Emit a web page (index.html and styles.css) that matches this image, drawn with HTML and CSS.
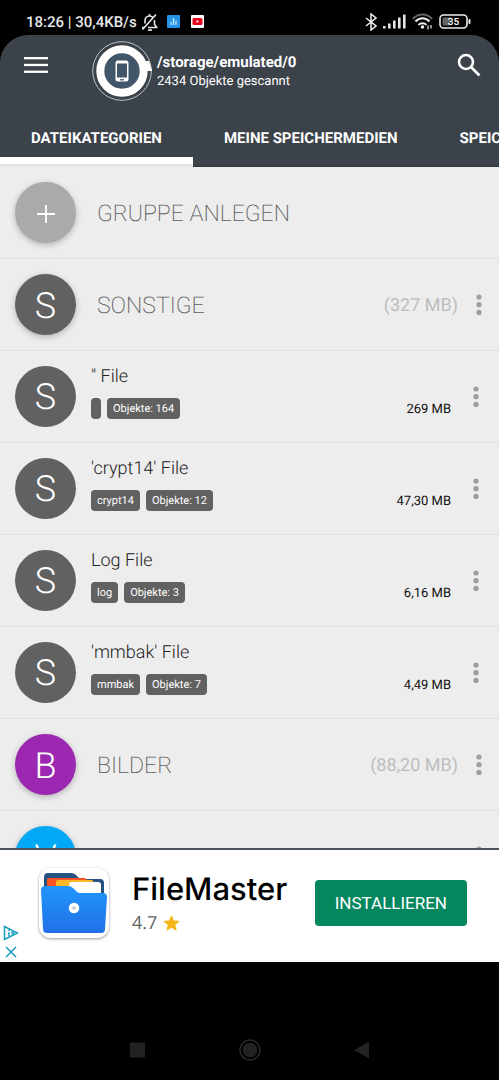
FILE: index.html
```html
<!DOCTYPE html>
<html lang="de">
<head>
    <meta charset="UTF-8">
    <meta name="viewport" content="width=device-width, initial-scale=1.0">
    <title>Dateikategorien</title>
    <link rel="stylesheet" href="styles.css">
</head>
<body>
    <svg class="defs" aria-hidden="true">
        <symbol id="dots" viewBox="0 0 6 22">
            <circle cx="3" cy="3" r="2.600"/><circle cx="3" cy="10.700" r="2.600"/><circle cx="3" cy="18.400" r="2.600"/>
        </symbol>
    </svg>

    <div class="phone">
        <!-- Status bar -->
        <div class="status-bar">
            <div class="status-left">
                <span>18:26 | 30,4KB/s</span>
                <svg width="18" height="18" viewBox="0 0 18 18" fill="none" stroke="#e8e8e8" stroke-width="1.6">
                    <path d="M1 14.500h3M7 14.500h9.500M4 10.500V8c0-3 2-5 4.500-5 1.500 0 2.500.5 3.300 1.300M13.500 7v4.500l2.500 3M8.500 3V1M1.500 16.500L15 1.500"/>
                    <path d="M7 17h4"/>
                </svg>
                <svg class="status-app" width="13" height="13" viewBox="0 0 13 13">
                    <rect width="13" height="13" rx="1" fill="#2492e6"/>
                    <path d="M4 10V7M6.500 10V3M9 10V5.500" stroke="#c5e6ff" stroke-width="1.300"/>
                </svg>
                <svg class="status-app" width="13" height="13" viewBox="0 0 13 13">
                    <rect width="13" height="13" rx="1" fill="#fff"/>
                    <rect x="1.500" y="3" width="10" height="7" rx="1.500" fill="#e8001c"/>
                    <path d="M5.500 5v3l2.500-1.500z" fill="#fff"/>
                </svg>
            </div>
            <div class="status-right">
                <svg width="12" height="18" viewBox="0 0 12 18" fill="none" stroke="#eee" stroke-width="1.500">
                    <path d="M1 5l10 8-5 4V1l5 4-10 8"/>
                </svg>
                <svg width="23" height="15" viewBox="0 0 23 15" fill="#e4e4e4">
                    <rect x="0" y="12" width="2.600" height="2.500"/><rect x="5" y="9.500" width="2.600" height="5"/>
                    <rect x="10" y="6.500" width="2.600" height="8"/><rect x="15" y="3.500" width="2.600" height="11"/>
                    <rect x="20" y="0.500" width="2.600" height="14"/>
                </svg>
                <svg width="21" height="17" viewBox="0 0 21 17" fill="none" stroke-width="2">
                    <path d="M1 6c5-6 14-6 19 0" stroke="#666"/>
                    <path d="M3.500 8.500c4-4.500 10-4.500 14 0M6.500 12c2-2.500 6-2.500 8 0" stroke="#eee"/>
                    <circle cx="10.500" cy="14" r="1.800" fill="#eee"/>
                    <path d="M16 12.500v4M19 12v3.500" stroke="#ddd" stroke-width="1.300"/>
                </svg>
                <svg width="32" height="15" viewBox="0 0 32 15">
                    <rect x="1" y="1" width="27" height="13" rx="3.500" fill="none" stroke="#eee" stroke-width="1.600"/>
                    <rect x="3.500" y="3.500" width="8" height="8" rx="1" fill="#666"/>
                    <rect x="29.500" y="5" width="2" height="5" rx="1" fill="#eee"/>
                    <text class="battery-text" x="14.500" y="11" text-anchor="middle">35</text>
                </svg>
            </div>
        </div>

        <!-- Toolbar and tabs -->
        <header class="header">
            <div class="toolbar">
                <button class="icon-btn" aria-label="Menü">
                    <svg width="25" height="18" viewBox="0 0 25 18" fill="#fff">
                        <rect x="1" y="1" width="24" height="2.300"/><rect x="1" y="7.800" width="24" height="2.300"/><rect x="1" y="14.600" width="24" height="2.300"/>
                    </svg>
                </button>
                <svg class="storage-icon" width="62" height="62" viewBox="0 0 62 62">
                    <circle cx="30" cy="30" r="29.300" fill="none" stroke="#b9c3cb"/>
                    <circle cx="30" cy="30" r="21.700" fill="#42566a" stroke="#fff" stroke-width="8"/>
                    <path d="M54 20h3l3 9v1h-6z" fill="#fff"/>
                    <rect x="23.500" y="19.500" width="13" height="21" rx="2.300" fill="#fff"/>
                    <rect x="25" y="22.500" width="10" height="14" fill="#42566a"/>
                    <rect x="28" y="38.200" width="4" height="1.200" fill="#42566a"/>
                </svg>
                <div class="storage-info">
                    <h1 class="storage-path">/storage/emulated/0</h1>
                    <p class="storage-count">2434 Objekte gescannt</p>
                </div>
                <button class="icon-btn" aria-label="Suchen">
                    <svg width="24" height="24" viewBox="0 0 24 24" fill="none" stroke="#fff" stroke-width="2.600">
                        <circle cx="9" cy="9" r="7"/><path d="M14 14l8.500 8.500"/>
                    </svg>
                </button>
            </div>
            <nav class="tabs">
                <a class="tab active" href="#kategorien">DATEIKATEGORIEN</a>
                <a class="tab" href="#medien">MEINE SPEICHERMEDIEN</a>
                <a class="tab" href="#speicher">SPEICHER</a>
            </nav>
        </header>

        <!-- Category list -->
        <main class="list">
            <div class="row group">
                <button class="avatar add raised" aria-label="Gruppe anlegen">
                    <svg width="18" height="18" viewBox="0 0 18 18" stroke="#fff" stroke-width="1.800"><path d="M9 0v18M0 9h18"/></svg>
                </button>
                <h2 class="group-name">GRUPPE ANLEGEN</h2>
            </div>
            <div class="row group">
                <div class="avatar raised">S</div>
                <h2 class="group-name">SONSTIGE</h2>
                <span class="group-size">(327 MB)</span>
                <button class="more" aria-label="Mehr"><svg width="6" height="22"><use href="#dots"/></svg></button>
            </div>
            <div class="row file">
                <div class="avatar">S</div>
                <div class="file-info">
                    <h3 class="file-name">" File</h3>
                    <div class="tags"><span class="tag"></span><span class="tag">Objekte: 164</span></div>
                </div>
                <span class="file-size">269 MB</span>
                <button class="more" aria-label="Mehr"><svg width="6" height="22"><use href="#dots"/></svg></button>
            </div>
            <div class="row file">
                <div class="avatar">S</div>
                <div class="file-info">
                    <h3 class="file-name">'crypt14' File</h3>
                    <div class="tags"><span class="tag">crypt14</span><span class="tag">Objekte: 12</span></div>
                </div>
                <span class="file-size">47,30 MB</span>
                <button class="more" aria-label="Mehr"><svg width="6" height="22"><use href="#dots"/></svg></button>
            </div>
            <div class="row file">
                <div class="avatar">S</div>
                <div class="file-info">
                    <h3 class="file-name">Log File</h3>
                    <div class="tags"><span class="tag">log</span><span class="tag">Objekte: 3</span></div>
                </div>
                <span class="file-size">6,16 MB</span>
                <button class="more" aria-label="Mehr"><svg width="6" height="22"><use href="#dots"/></svg></button>
            </div>
            <div class="row file">
                <div class="avatar">S</div>
                <div class="file-info">
                    <h3 class="file-name">'mmbak' File</h3>
                    <div class="tags"><span class="tag">mmbak</span><span class="tag">Objekte: 7</span></div>
                </div>
                <span class="file-size">4,49 MB</span>
                <button class="more" aria-label="Mehr"><svg width="6" height="22"><use href="#dots"/></svg></button>
            </div>
            <div class="row group">
                <div class="avatar raised purple">B</div>
                <h2 class="group-name">BILDER</h2>
                <span class="group-size">(88,20 MB)</span>
                <button class="more" aria-label="Mehr"><svg width="6" height="22"><use href="#dots"/></svg></button>
            </div>
            <div class="row group">
                <div class="avatar raised blue">V</div>
                <h2 class="group-name">VIDEOS</h2>
                <button class="more" aria-label="Mehr"><svg width="6" height="22"><use href="#dots"/></svg></button>
            </div>
        </main>

        <!-- Ad banner -->
        <aside class="ad">
            <div class="ad-controls">
                <a href="#info" aria-label="Info">
                    <svg width="16" height="16" viewBox="0 0 16 16" fill="none" stroke="#1a9dba" stroke-width="1.500">
                        <path d="M1.500 1.500v13l13-6.500z"/><path d="M6 7v4.500M6 4.500v1.500"/><path d="M8.500 6v4l3.500-2z" fill="#1a9dba" stroke="none"/>
                    </svg>
                </a>
                <button class="ad-close" aria-label="Schließen">
                    <svg width="12" height="12" viewBox="0 0 12 12" stroke="#1a9dba" stroke-width="1.500"><path d="M1 1l10 10M11 1L1 11"/></svg>
                </button>
            </div>
            <svg class="ad-icon" width="70" height="70" viewBox="0 0 70 70">
                <defs>
                    <linearGradient id="folder" x1="0" y1="0" x2="0" y2="1">
                        <stop offset="0" stop-color="#2196fb"/><stop offset="1" stop-color="#2170e8"/>
                    </linearGradient>
                </defs>
                <path d="M5 20V9q0-4 4-4h23q3 0 5 2l4 4h20q4 0 4 4v15H5z" fill="#265283"/>
                <path d="M8 25V12q0-2 2-2h36l2 2v13z" fill="#fb5226"/>
                <path d="M17 25V14q0-2 2-2h34l2 2v11z" fill="#fdb827"/>
                <path d="M30 17q0-3 3-3h26q3 0 3 3v12H35z" fill="#fff"/>
                <path d="M2 22q0-4 4-4h23q3 0 5 2l4 4q1 1 3 1h23q4 0 4 4l-2 32q0 4-4 4H8q-4 0-4-4z" fill="url(#folder)"/>
                <circle cx="35" cy="40" r="5.300" fill="#fff"/>
                <circle cx="35" cy="40" r="1.800" fill="#bfc8d0"/>
            </svg>
            <div class="ad-info">
                <div class="ad-title">FileMaster</div>
                <div class="ad-rating">
                    <span>4.7</span>
                    <svg width="17" height="16" viewBox="0 0 24 23" fill="#f4b615"><path d="M12 0l3.500 8 8.500.8-6.500 5.700 2 8.500L12 18.500 4.500 23l2-8.500L0 8.800 8.500 8z"/></svg>
                </div>
            </div>
            <button class="install">INSTALLIEREN</button>
        </aside>

        <!-- Android navigation -->
        <nav class="nav-bar">
            <button class="nav-btn" aria-label="Letzte Apps">
                <svg width="22" height="22" viewBox="0 0 22 22"><rect x="3" y="3.500" width="15" height="15" fill="#222"/></svg>
            </button>
            <button class="nav-btn" aria-label="Startseite">
                <svg width="22" height="22" viewBox="0 0 22 22"><circle cx="11" cy="11" r="10" fill="none" stroke="#292929" stroke-width="1.500"/><circle cx="11" cy="11" r="7.300" fill="#222"/></svg>
            </button>
            <button class="nav-btn" aria-label="Zurück">
                <svg width="22" height="22" viewBox="0 0 22 22"><path d="M3 11l15-8.500v17z" fill="#222"/></svg>
            </button>
        </nav>
    </div>
</body>
</html>
```

FILE: styles.css
```css
* { margin: 0; padding: 0; box-sizing: border-box; }
body {
    background: #000;
    color: #212121;
    font-family: Roboto, "Liberation Sans", sans-serif;
    text-rendering: geometricPrecision;
}
svg { display: block; flex-shrink: 0; }
button {
    background: none;
    border: none;
    font: inherit;
    color: inherit;
    cursor: pointer;
}
a { color: inherit; text-decoration: none; }
.defs { display: none; }
.phone {
    display: flex;
    flex-direction: column;
    height: 100vh;
}

/* Status bar */
.status-bar {
    display: flex;
    justify-content: space-between;
    align-items: center;
    padding: 8px 28px 0 26px;
    height: 35px;
    flex-shrink: 0;
    color: #e8e8e8;
    font-size: 15px;
    font-weight: 500;
}
.status-left { display: flex; align-items: center; gap: 4px; }
.status-app { margin-left: 4px; margin-right: 3px; }
.status-right { display: flex; align-items: center; gap: 6px; }
.battery-text {
    fill: #fff;
    font-size: 10px;
    font-weight: 500;
}

/* Header */
.header {
    background: #3b4249;
    border-radius: 28px 28px 0 0;
    box-shadow: inset 0 -2px #363b40;
    color: #fff;
    flex-shrink: 0;
}
.toolbar {
    display: flex;
    align-items: center;
    height: 73px;
    padding: 0 18px 0 23px;
}
.icon-btn {
    display: flex;
    height: 60px;
    align-items: center;
    padding-bottom: 13px;
}
.storage-icon { margin-left: 44px; }
.storage-info { flex: 1; padding: 1px 0 0 3px; }
.storage-path {
    font-size: 15px;
    line-height: 19px;
    font-weight: 700;
}
.storage-count {
    font-size: 13px;
    line-height: 19px;
}
.tabs {
    display: flex;
    height: 59px;
    overflow: hidden;
}
.tab {
    flex-shrink: 0;
    padding: 21px 31px 0;
    font-size: 15px;
    line-height: 18px;
    font-weight: 700;
}
.tab.active {
    border-bottom: 3px solid #e6e6e6;
    box-shadow: inset 0 -7px #fff;
}

/* List */
.list {
    flex: 1;
    min-height: 0;
    overflow: hidden;
    background: #ededed;
}
.row {
    display: flex;
    align-items: center;
    height: 92px;
    padding-left: 15px;
    border-bottom: 1px solid #dfdfdf;
}
.group { padding-right: 17px; }
.file { padding-right: 20px; }
.avatar {
    display: flex;
    align-items: center;
    justify-content: center;
    width: 61px;
    height: 61px;
    flex-shrink: 0;
    border-radius: 50%;
    background: #616161;
    color: #fff;
    font-size: 36px;
    font-weight: 300;
}
.avatar.raised {
    padding-top: 3px;
    box-shadow: 0 2px 6px rgba(0, 0, 0, 0.25);
}
.avatar.add { background: #aaa; }
.avatar.purple { background: #9c27b0; }
.avatar.blue { background: #03a9f4; }
.group-name {
    flex: 1;
    padding: 1px 0 0 21px;
    font-size: 23px;
    font-weight: 200;
    color: #5c5c5c;
}
.group-size {
    padding-top: 1px;
    font-size: 18px;
    color: #bdbdbd;
}
.more {
    display: flex;
    width: 6px;
    fill: #9e9e9e;
}
.group .more { margin-left: 18px; }
.file .more { margin-left: 22px; }
.file-info { flex: 1; padding: 0 0 9px 15px; }
.file-name {
    margin-bottom: 10px;
    font-size: 18px;
    line-height: 22px;
    font-weight: 300;
}
.tags { display: flex; gap: 6px; }
.tag {
    height: 21px;
    padding: 0 5px;
    border-radius: 4px;
    background: #616161;
    color: #fff;
    font-size: 11px;
    line-height: 22px;
    padding: 0 6px;
}
.tag:empty { padding: 0 5px; }
.file-size {
    padding-top: 25px;
    font-size: 13px;
    color: #111;
}

/* Ad */
.ad {
    display: flex;
    align-items: center;
    height: 114px;
    flex-shrink: 0;
    padding: 0 32px 4px 0;
    background: #fff;
    border-top: 2px solid #4c535d;
}
.ad-controls {
    display: flex;
    flex-direction: column;
    align-items: center;
    align-self: flex-end;
    gap: 5px;
    width: 16px;
    margin: 0 20px 0 3px;
}
.ad-close { display: flex; }
.ad-icon {
    margin-bottom: 2px;
    border-radius: 12px;
    background: #fff;
    box-shadow: 0 1px 3px rgba(0, 0, 0, 0.4);
}
.ad-info { flex: 1; padding-left: 23px; }
.ad-title {
    font-family: Inter, Roboto, sans-serif;
    font-size: 31px;
    line-height: 38px;
    font-weight: 500;
    color: #000;
}
.ad-rating {
    display: flex;
    align-items: center;
    gap: 6px;
    font-family: "Open Sans", Roboto, sans-serif;
    font-size: 18px;
    line-height: 28px;
    color: #616161;
}
.install {
    margin-bottom: 2px;
    padding: 0 20px;
    height: 46px;
    border-radius: 4px;
    background: #04875f;
    color: #fff;
    font-size: 17px;
}

/* Navigation */
.nav-bar {
    display: flex;
    justify-content: center;
    align-items: flex-end;
    gap: 90px;
    height: 118px;
    flex-shrink: 0;
    padding-bottom: 19px;
}
```
